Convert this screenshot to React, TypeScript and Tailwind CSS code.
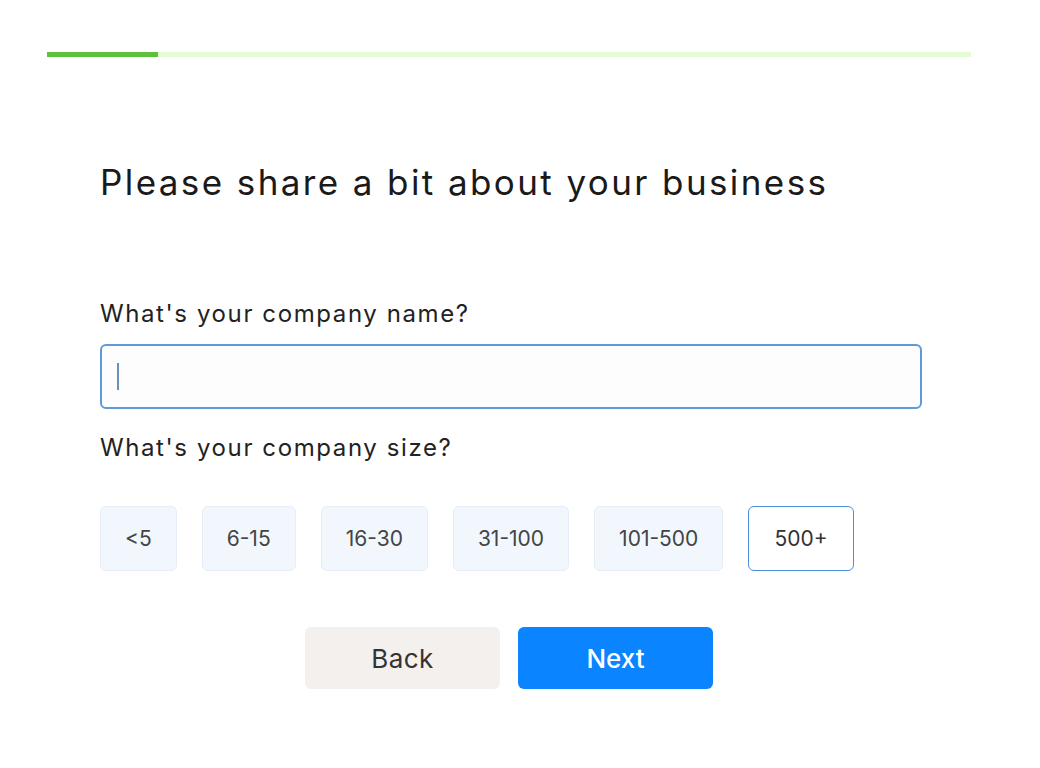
import { useState } from 'react';

const SIZES = ['<5', '6-15', '16-30', '31-100', '101-500', '500+'];

export default function App() {
  const [size, setSize] = useState('500+');

  return (
    <div className="min-h-screen w-full bg-white text-[#1a1a1a]" style={{ fontFamily: 'Inter, "Noto Sans", sans-serif' }}>
      {/* progress */}
      <div className="pt-[52px] pl-[47px] pr-[69px]">
        <div className="h-[5px] w-full bg-[#e4fbd6]">
          <div className="h-full w-[111px] bg-[#5cc23c]" />
        </div>
      </div>

      <div className="pl-[100px] pr-[118px]">
        <h1 className="mt-[101px] text-[35px] leading-[48px] font-normal tracking-[2.4px]">
          Please share a bit about your business
        </h1>

        <label className="mt-[92px] block text-[24px] leading-[32px] tracking-[1.6px] text-[#222]">
          What's your company name?
        </label>
        <div className="mt-[14px] flex h-[65px] items-center rounded-[6px] border-2 border-[#5b9bdc] bg-[#fdfdfd] px-[15px]">
          <span className="h-[27px] w-[2px] bg-[#6a8fb8]" />
        </div>

        <label className="mt-[23px] block text-[24px] leading-[32px] tracking-[1.6px] text-[#222]">
          What's your company size?
        </label>
        <div className="mt-[42px] flex gap-[25px]">
          {SIZES.map((s) => (
            <button
              key={s}
              onClick={() => setSize(s)}
              className={
                s === size
                  ? 'h-[65px] rounded-[6px] border-[1.5px] border-[#4a8fdc] bg-white px-[25px] text-[21px] text-[#333]'
                  : 'h-[65px] rounded-[6px] border border-[#e6edf4] bg-[#f1f7fd] px-[24px] text-[21px] text-[#444]'
              }
            >
              {s}
            </button>
          ))}
        </div>

        <div className="mt-[56px] mr-[4px] flex justify-center gap-[18px]">
          <button className="h-[62px] w-[195px] rounded-[6px] bg-[#f4f0ee] text-[26px] tracking-[0.5px] text-[#333]">Back</button>
          <button className="h-[62px] w-[195px] rounded-[6px] bg-[#0a84ff] text-[26px] font-medium text-white">Next</button>
        </div>
      </div>
    </div>
  );
}
